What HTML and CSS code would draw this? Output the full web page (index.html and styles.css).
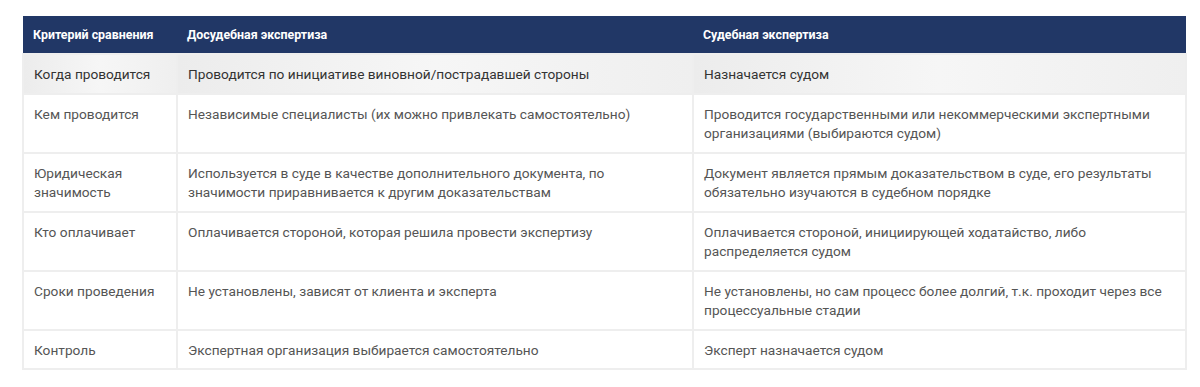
FILE: index.html
```html
<!DOCTYPE html>
<html lang="ru">
<head>
<meta charset="utf-8">
<title>Сравнение экспертиз</title>
<link rel="stylesheet" href="styles.css">
</head>
<body>
<div class="wrap">
<table class="cmp">
<colgroup>
<col class="c1"><col class="c2"><col class="c3">
</colgroup>
<thead>
<tr><th>Критерий сравнения</th><th>Досудебная экспертиза</th><th>Судебная экспертиза</th></tr>
</thead>
<tbody>
<tr class="hl"><td>Когда проводится</td><td>Проводится по инициативе виновной/пострадавшей стороны</td><td>Назначается судом</td></tr>
<tr><td>Кем проводится</td><td>Независимые специалисты (их можно привлекать самостоятельно)</td><td>Проводится государственными или некоммерческими экспертными организациями (выбираются судом)</td></tr>
<tr><td>Юридическая значимость</td><td>Используется в суде в качестве дополнительного документа, по значимости приравнивается к другим доказательствам</td><td>Документ является прямым доказательством в суде, его результаты обязательно изучаются в судебном порядке</td></tr>
<tr><td>Кто оплачивает</td><td>Оплачивается стороной, которая решила провести экспертизу</td><td>Оплачивается стороной, инициирующей ходатайство, либо распределяется судом</td></tr>
<tr><td>Сроки проведения</td><td>Не установлены, зависят от клиента и эксперта</td><td>Не установлены, но сам процесс более долгий, т.к. проходит через все процессуальные стадии</td></tr>
<tr><td>Контроль</td><td>Экспертная организация выбирается самостоятельно</td><td>Эксперт назначается судом</td></tr>
</tbody>
</table>
</div>
</body>
</html>
```

FILE: styles.css
```css
html, body {
  margin: 0;
  padding: 0;
  background: #ffffff;
}
.wrap {
  padding: 16px 15px 0 22px;
}
.cmp {
  width: 1163px;
  border-collapse: collapse;
  table-layout: fixed;
  font-family: Roboto, "Noto Sans", sans-serif;
}
.c1 { width: 154px; }
.c2 { width: 516px; }
.c3 { width: 493px; }
.cmp th {
  background: #213766;
  color: #ffffff;
  font-size: 12.4px;
  font-weight: 700;
  text-align: left;
  line-height: 14px;
  padding: 12px 10px 11px 10px;
  border-bottom: 1px solid #3c5384;
}
.cmp td {
  font-size: 13.7px;
  color: #555555;
  line-height: 19.5px;
  padding: 10px 10px 8px 10px;
  vertical-align: top;
  border: 2px solid #eeeeee;
}
.cmp tr.hl td {
  background: linear-gradient(to right, #ececec, #f6f6f6 50%, #efefef);
  color: #333333;
}
```
